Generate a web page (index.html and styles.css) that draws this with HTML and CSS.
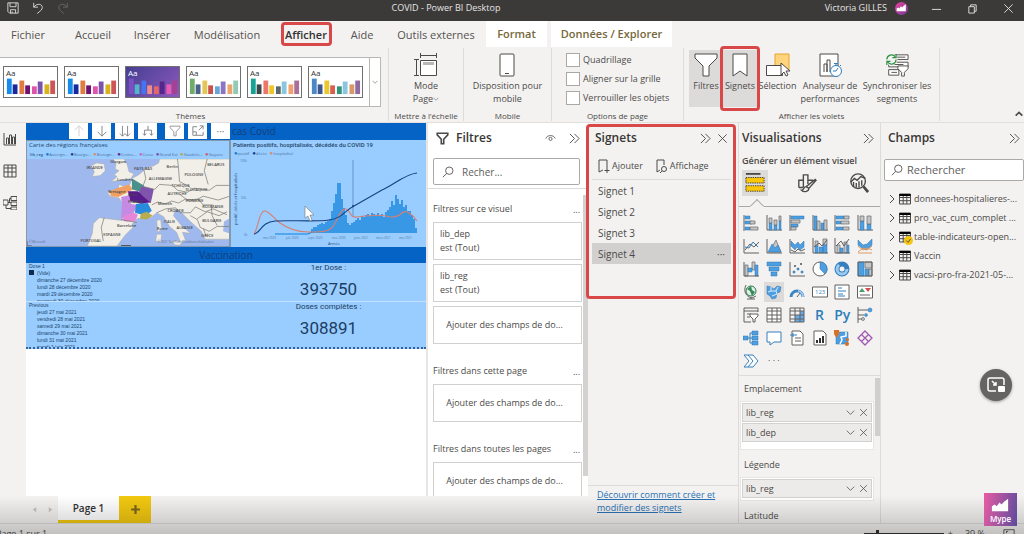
FILE: index.html
```html
<!DOCTYPE html>
<html lang="fr">
<head>
<meta charset="utf-8">
<title>COVID - Power BI Desktop</title>
<link rel="stylesheet" href="styles.css">
</head>
<body>
<svg class="defs" aria-hidden="true">
  <symbol id="theme" viewBox="0 0 55 31">
    <rect class="c1" x="3" y="12" width="5" height="16"/><rect class="c2" x="9" y="18" width="5" height="10"/><rect class="c3" x="16" y="14" width="5" height="14"/><rect class="c4" x="22" y="19" width="5" height="9"/><rect class="c5" x="29" y="20" width="5" height="8"/><rect class="c6" x="35" y="15" width="5" height="13"/><rect class="c7" x="42" y="18" width="5" height="10"/><rect class="c8" x="48" y="14" width="5" height="14"/>
  </symbol>
  <symbol id="more-right" viewBox="0 0 12 12"><path class="ln" d="M1 1l5 5-5 5M6 1l5 5-5 5"/></symbol>
  <symbol id="close" viewBox="0 0 12 12"><path class="ln" d="M1.5 1.5l9 9M10.5 1.5l-9 9"/></symbol>
  <symbol id="down" viewBox="0 0 12 12"><path class="ln" d="M1 3.5l5 5 5-5"/></symbol>
  <symbol id="right" viewBox="0 0 8 12"><path class="ln" d="M2 2l4 4-4 4"/></symbol>
  <symbol id="search" viewBox="0 0 14 14"><circle class="ln" cx="8.5" cy="5.5" r="4.3"/><path class="ln" d="M5.5 8.7L1 13"/></symbol>
  <symbol id="funnel" viewBox="0 0 16 16"><path class="ln" d="M1.5 1.5h13v2L9.5 9v5.5h-3V9l-5-5.5z"/></symbol>
  <symbol id="table" viewBox="0 0 12 12"><path class="ln" d="M.5 1h11v10H.5zM.5 4.5h11M.5 7.7h11M4.2 1v10M7.8 1v10"/><path d="M.5 1h11v2H.5z"/></symbol>
  <symbol id="mype" viewBox="0 0 34 34"><path fill="#fff" d="M8 19v-5l3-2 2 2 3-4 2 2 3-3 4-3v13z"/></symbol>
</svg>

<header class="titlebar">
  <div class="quick">
    <button aria-label="Enregistrer"><svg viewBox="0 0 14 14"><path class="ln" d="M1 1h12v12H3l-2-2zM3.5 1v4.500h7V1M4 13V9h6v4M6 13v-2"/></svg></button>
    <button aria-label="Annuler"><svg viewBox="0 0 14 14"><path class="ln" d="M2 1v5h5M2 6C6 1 12 2 12 6.500 12 9 9 11 6 13.500"/></svg></button>
    <button aria-label="Rétablir" class="dim"><svg viewBox="0 0 14 14"><path class="ln" d="M12 1v5H7M12 6C8 1 2 2 2 6.500 2 9 5 11 8 13.500"/></svg></button>
  </div>
  <h1>COVID - Power BI Desktop</h1>
  <div class="account"><span>Victoria GILLES</span><svg class="avatar" viewBox="5 2 24 24"><use href="#mype" width="34" height="34"/></svg></div>
  <div class="window-buttons">
    <button aria-label="Réduire"><svg viewBox="0 0 12 12"><path class="ln" d="M1 7h10"/></svg></button>
    <button aria-label="Restaurer"><svg viewBox="0 0 12 12"><path class="ln" d="M2 4h6v7H2zM4 4V2h6v7H8"/></svg></button>
    <button aria-label="Fermer"><svg viewBox="0 0 12 12"><use href="#close"/></svg></button>
  </div>
</header>

<nav class="tabs">
  <a href="#fichier" class="file">Fichier</a><a href="#accueil">Accueil</a><a href="#inserer">Insérer</a><a href="#modelisation">Modélisation</a><a href="#afficher" class="active marked">Afficher</a><a href="#aide">Aide</a><a href="#outils">Outils externes</a><a href="#format" class="context">Format</a><a href="#donnees" class="context last">Données / Explorer</a>
</nav>

<section class="ribbon">
  <div class="group themes">
    <div class="gallery">
      <button class="theme t1"><span>Aa</span><svg><use href="#theme"/></svg></button>
      <button class="theme t1"><span>Aa</span><svg><use href="#theme"/></svg></button>
      <button class="theme t3"><span>Aa</span><svg><use href="#theme"/></svg></button>
      <button class="theme t4"><span>Aa</span><svg><use href="#theme"/></svg></button>
      <button class="theme t5"><span>Aa</span><svg><use href="#theme"/></svg></button>
      <button class="theme t6"><span>Aa</span><svg><use href="#theme"/></svg></button>
      <button class="expand" aria-label="Autres thèmes"><svg viewBox="0 0 12 12"><use href="#down"/></svg></button>
    </div>
    <h2>Thèmes</h2>
  </div>
  <div class="group scale">
    <div class="tools"><button class="tool"><svg viewBox="0 0 24 24"><path class="ln" fill="#fff" d="M6.500 7.500h16v15h-16z"/><path fill="#b9b8b7" d="M9 9h11v3H9z"/><path class="ln" d="M6.500 2.500h16M6.500 0v5M22.500 0v5M2.500 6.500v16M0 6.500h5M0 22.500h5"/></svg><span>Mode<br>Page<svg class="caret" viewBox="0 0 12 12"><use href="#down"/></svg></span></button></div>
    <h2>Mettre à l’échelle</h2>
  </div>
  <div class="group mobile">
    <div class="tools"><button class="tool"><svg viewBox="0 0 24 24"><rect class="ln" fill="#fff" x="5" y="1" width="14" height="22" rx="1"/><path class="ln" d="M10 20.500h4"/></svg><span>Disposition pour<br>mobile</span></button></div>
    <h2>Mobile</h2>
  </div>
  <div class="group options">
    <div class="checks">
      <label><input type="checkbox">Quadrillage</label>
      <label><input type="checkbox">Aligner sur la grille</label>
      <label><input type="checkbox">Verrouiller les objets</label>
    </div>
    <h2>Options de page</h2>
  </div>
  <div class="group panes">
    <div class="tools">
      <button class="tool on"><svg viewBox="0 0 24 24"><path class="ln" fill="#fff" d="M1 1h22v4l-8 8v10H9V13L1 5z"/></svg><span>Filtres</span></button>
      <button class="tool on marked"><svg viewBox="0 0 24 24"><path class="ln" fill="#fff" d="M5 1h14v22l-7-5-7 5z"/></svg><span>Signets</span></button>
      <button class="tool select"><svg viewBox="0 0 24 24"><path fill="#ffd47c" stroke="#e8a32c" d="M9 1h14v16H9z"/><path class="ln" fill="#fff" d="M.5 12.500h16v10H.5z"/><path class="ln" fill="#fff" d="M15 10v12l3-3 2 4 2-1-2-4h4z"/></svg><span>Sélection</span></button>
      <button class="tool perf"><svg viewBox="0 0 24 24"><path class="ln" fill="#fff" d="M2 1h18v22H2z"/><path class="ln" d="M6 19v-8h3v8M9 19V7h3v12"/><g fill="#fff" stroke="#2f7fc0"><circle cx="18" cy="18" r="5.500"/><path d="M16 10.500h4M18 11v2M18 18l2-3M18 18h-3M22 12l1 1"/></g></svg><span>Analyseur de<br>performances</span></button>
      <button class="tool sync"><svg viewBox="0 0 26 24"><path class="ln" fill="#fff" d="M10 1h15v5H10zM4 9h21v5H4zM4 17h11v6H4z"/><path class="ln" d="M13 3.500h9M8 11.500h12M7 20h6"/><circle cx="7" cy="6" r="6.500" fill="#f3f2f1"/><path fill="none" stroke="#2f9145" stroke-width="1.300" d="M2 6a5 5 0 0 1 9-3M12 0v4H8M12 6a5 5 0 0 1-9 3M2 12V8h4"/><path class="ln" fill="#fff" d="M14 13h11v3l-4 4v4h-3v-4l-4-4z"/></svg><span>Synchroniser les<br>segments</span></button>
    </div>
    <h2>Afficher les volets</h2>
  </div>
  <button class="collapse" aria-label="Réduire le ruban"><svg viewBox="0 0 12 12"><path class="ln" stroke-width="2" d="M2 8l4-4 4 4"/></svg></button>
</section>

<main class="workspace">
  <nav class="views">
    <button aria-label="Rapport"><svg viewBox="0 0 14 14"><path class="ln" d="M1 1v12h12M3.500 12V6h2v6M6.500 12V3h2v9M9.500 12V5h2v7M12.500 12V2"/></svg></button>
    <button aria-label="Données"><svg viewBox="0 0 14 14"><path class="ln" d="M1 1h12v12H1zM1 4h12M1 8h12M5 1v12M9 1v12"/></svg></button>
    <button aria-label="Modèle"><svg viewBox="0 0 14 14"><path class="ln" d="M0 4h5v5H0zM8 .5h6v4H8zM8 6h6v3.500H8zM8 11h6v3H8zM5 6.500h3M6.500 6V2.500H8M3 9v3.500h5"/></svg></button>
  </nav>

  <div class="editor">
    <div class="editor-top">
      <div class="canvas">
        <div class="report">
          <div class="banner first">cas Covid
            <div class="visual-tools">
              <button class="faint" aria-label="Monter"><svg viewBox="0 0 14 14"><path class="ln" d="M7 13V1M2 6l5-5 5 5"/></svg></button>
              <button aria-label="Descendre"><svg viewBox="0 0 14 14"><path class="ln" d="M7 1v12M2 8l5 5 5-5"/></svg></button>
              <button aria-label="Niveau suivant"><svg viewBox="0 0 14 14"><path class="ln" d="M4 1v12M1 10l3 3 3-3M10 1v12M7 10l3 3 3-3"/></svg></button>
              <button aria-label="Développer"><svg viewBox="0 0 14 14"><path class="ln" d="M7 1v5M3 12V6h8v6M1 10l2 2 2-2M9 10l2 2 2-2"/></svg></button>
              <button class="apart" aria-label="Filtres"><svg viewBox="0 0 16 16"><use href="#funnel"/></svg></button>
              <button aria-label="Mode focus"><svg viewBox="0 0 14 14"><path class="ln" d="M6 2H1v10h12V8M9 1h4v4M13 1L8 6M1 8h4v4"/></svg></button>
              <button aria-label="Plus d’options">···</button>
            </div>
          </div>
          <article class="visual map-visual">
            <h3>Carte des régions françaises</h3>
            <ul class="legend">
              <li class="title">lib_reg</li><li class="l1">Auvergn...</li><li class="l2">Bourgo...</li><li class="l3">Bretagn...</li><li class="l4">Centre...</li><li class="l5">Corse</li><li class="l6">Grand Est</li><li class="l7">Guadelo...</li><li class="l8">Guyane</li>
            </ul>
            <svg class="map" viewBox="0 0 204 89" preserveAspectRatio="none">
              <path fill="#9fb8ee" d="M0 0h204v89H0z"/>
              <g fill="#f1efe8" stroke="#aaa9a2" stroke-width=".5">
                <path d="M65 7l5-3 8 1 1 7-5 5-8 1 2-5z"/>
                <path d="M87 0l3 5-1 5 4 2-5 4 3 2-6 5 8-1 12-2 3-5-5-2-2-8-3-5z"/>
                <path d="M134 0l-1 4-5 3-7 2-8 7-7 4-2 6-6 2-5-2-1 6-11 2 3 4 9 2 4 6-1 17-23-3-6 6-1 10-5 13h30l8-11 8-8-1-3 5-6 14-1 6-5 7 4 6 10 7 6 4 10 5-2-3-8 8 1-10-9-7-9 2-7 4 2 11 11 11 10 4 8h31V0z"/>
                <path d="M131 63l4-1 1 10-4 3zM131 77h5l-1 8-5-1zM145 84h12l-2 4h-5z"/>
              </g>
              <path fill="#9fb8ee" d="M204 61l-5 3-1 10 6 2z"/>
              <path fill="#f0a064" d="M83 33l8-3 12-4 4 5-7 4-8 4-7-1z"/><path fill="#4b918b" d="M106 20l12 7-2 7-10-3z"/><path fill="#8054ad" d="M116 28l12 3-3 14-8-1-5-8z"/><path fill="#581b8c" d="M102 33l10 0 6 6 6 5-8 2-12-3z"/><path fill="#c48ae4" d="M95 39l8-2 2 9 7 1-5 9-12 5 1-16z"/><path fill="#298bdb" d="M110 46l12-1 4 8-6 5-11-3z"/><path fill="#e586d7" d="M96 62l4-5 8-2 4 2-3 7-10 0z"/><path fill="#b7ac50" d="M115 56l6-2 6 4-6 4-7-1z"/>
              <g fill="none" stroke="#74736f" stroke-width=".7"><path d="M118 11l2 9-3 8 12 3 5-5 13 1 5 5 10 2 7-4 15 2 7-5 13 0M126 47l6-3 8 2 6-3 7 2 7-4 9 2 9-5 15 4 12-4M131 55l9-4 10-1 5 5 10 0 5-6 10 5 8-3 14 6M152 0l1 9 1 14 11 6M182 0l-3 12 4 14M154 36l8 6 11-1 5 6 10 0M165 58l7 4 3 8 9 4 8-5 12 0M172 61l10-7 12 4 8-4M178 71l3 8M78 60l-3 10 2 14M95 62l16 3M186 48l1 10 5 10"/></g>
              <g class="country"><text x="60" y="10">IRLANDE</text><text x="84" y="4">Glasgow</text><text x="108" y="11">PAYS-BAS</text><text x="123" y="21">ALLEMAGNE</text><text x="159" y="17">POLOGNE</text><text x="182" y="7">BELARUS</text><text x="91" y="23">Londres</text><text x="141" y="9">Berlin</text><text x="146" y="29">TCHÈQUE</text><text x="160" y="33">SLOVAQUIE</text><text x="142" y="37">AUTRICHE</text><text x="160" y="44">HONGRIE</text><text x="177" y="50">ROUMANIE</text><text x="132" y="47">Munich</text><text x="142" y="54">CROATIE</text><text x="177" y="64">BULGARIE</text><text x="138" y="65">ITALIE</text><text x="131" y="73">Rome</text><text x="77" y="79">ESPAGNE</text><text x="54" y="85">PORTUGAL</text><text x="176" y="80">GRÈCE</text><text x="91" y="70">Barcelone</text><text x="102" y="38">Paris</text><text x="102" y="45">FRANCE</text><text x="82" y="35">Bretagne</text><text x="151" y="72">ALBANIE</text></g>
              <g class="credit"><text x="2" y="86">© Microsoft</text><text x="132" y="86">© 2021 TomTom, Conditions d’utilisation</text></g>
              <path fill="none" stroke="#555" d="M0 84v5h5M95 88.500h10"/>
            </svg>
          </article>
          <article class="visual chart-visual">
            <h3>Patients positifs, hospitalisés, décédés du COVID 19</h3>
            <ul class="legend"><li class="l1">positif</li><li class="l2">décès</li><li class="l3">hospitalisé</li></ul>
            <svg class="chart" viewBox="0 0 195 89">
              <path fill="none" stroke="#3d76ad" stroke-width=".6" d="M122 2v56"/>
              <path fill="none" stroke="#0f82dc" stroke-width="1.100" d="M44 76h33l4-2"/>
              <path fill="none" stroke="#0f82dc" stroke-width="1.400" d="M81 75v-4M83 75v-6M85 75v-6M87 75v-8M89 75v-9M91 75v-10M93 75v-9M95 75v-11M97 75v-12M99 75v-14M101 75v-22M103 75v-30M105 75v-39M107 75v-50M109 75v-50M111 75v-34M113 75v-25M115 75v-18M117 75v-10M119 75v-8M121 75v-10M123 75v-11M125 75v-13M127 75v-15M129 75v-13M131 75v-17M133 75v-16M135 75v-18M137 75v-19M139 75v-17M141 75v-20M143 75v-19M145 75v-18M147 75v-20M149 75v-17M151 75v-19M153 75v-16M155 75v-21M157 75v-23M159 75v-26M161 75v-32M163 75v-28M165 75v-38M167 75v-34M169 75v-29M171 75v-33M173 75v-26M175 75v-28M177 75v-22M179 75v-22M181 75v-18M183 75v-14M185 75v-5"/>
              <path fill="none" stroke="#d67f72" stroke-width="1.100" d="M23 76c4-5 5-22 10-23s9 7 16 12 17 9 28 9 21 1 26-7 7-17 12-16 3 9 11 8 22-3 29-1 12 1 16-3 11 2 15 8"/>
              <path fill="none" stroke="#16417f" stroke-width="1.100" d="M23 76c7-1 7-12 21-13s40 1 54-1 15-9 25-14l28-16c10-4 23-16 35-17"/>
              <circle cx="122" cy="48" r="1" fill="#174180"/>
              <path fill="#fff" stroke="#777" stroke-width=".6" d="M74 48v12l3-2 2 5 2-1-2-5h4z"/>
              <g class="axis"><text x="9" y="4">100k</text><text x="10" y="41">50k</text><text x="13" y="78">0k</text><text x="32" y="81">mai 2020</text><text x="55" y="81">juil. 2020</text><text x="77" y="81">sept. 2020</text><text x="101" y="81">nov. 2020</text><text x="123" y="81">janv. 2021</text><text x="145" y="81">mars 2021</text><text x="168" y="81">mai 2021</text></g>
              <g class="axis-title"><text x="97" y="87">Année</text><text transform="translate(6 67)rotate(-90)">positif, décès et hospitalisés</text></g>
            </svg>
          </article>
          <div class="banner second">Vaccination</div>
          <div class="slicer"><h4>Dose 1</h4><ul><li class="checked">(Vide)</li><li>dimanche 27 décembre 2020</li><li>lundi 28 décembre 2020</li><li>mardi 29 décembre 2020</li><li>mercredi 30 décembre 2020</li></ul></div>
          <div class="card"><h4>1er Dose :</h4><p>393750</p></div>
          <div class="slicer lower"><h4>Previous</h4><ul><li>jeudi 27 mai 2021</li><li>vendredi 28 mai 2021</li><li>samedi 29 mai 2021</li><li>dimanche 30 mai 2021</li><li>lundi 31 mai 2021</li><li>mardi 1 juin 2021</li></ul></div>
          <div class="card lower"><h4>Doses complètes :</h4><p>308891</p></div>
        </div>
      </div>

      <aside class="filters">
        <header class="pane-head"><svg class="lead" viewBox="0 0 16 16"><use href="#funnel"/></svg><h2>Filtres</h2><button class="eye" aria-label="Masquer"><svg viewBox="0 0 14 12"><path class="ln" d="M1 6C3 1 11 1 13 6"/><circle class="ln" cx="7" cy="6.500" r="2"/></svg></button><button aria-label="Réduire"><svg viewBox="0 0 12 12"><use href="#more-right"/></svg></button></header>
        <div class="search"><svg viewBox="0 0 14 14"><use href="#search"/></svg><input type="text" aria-label="Rechercher un filtre" placeholder="Recher..."></div>
        <div class="filter-list">
          <section><h3>Filtres sur ce visuel<button aria-label="Plus">...</button></h3>
            <div class="filter">lib_dep<br>est (Tout)</div><div class="filter">lib_reg<br>est (Tout)</div><div class="filter add">Ajouter des champs de do...</div></section>
          <section><h3>Filtres dans cette page<button aria-label="Plus">...</button></h3><div class="filter add">Ajouter des champs de do...</div></section>
          <section><h3>Filtres dans toutes les pages<button aria-label="Plus">...</button></h3><div class="filter add">Ajouter des champs de do...</div></section>
        </div>
      </aside>
    </div>
    <div class="page-tabs"><button class="step" aria-label="Précédente"><svg viewBox="0 0 8 8"><path d="M6 1v6L2 4z"/></svg></button><button class="step" aria-label="Suivante"><svg viewBox="0 0 8 8"><path d="M2 1v6l4-3z"/></svg></button><button class="page">Page 1</button><button class="add-page" aria-label="Nouvelle page"><svg viewBox="0 0 10 10"><path d="M4 1h2v3h3v2H6v3H4V6H1V4h3z"/></svg></button></div>
  </div>

  <aside class="bookmarks">
    <div class="bookmark-box">
      <header class="pane-head"><h2>Signets</h2><button aria-label="Réduire"><svg viewBox="0 0 12 12"><use href="#more-right"/></svg></button><button aria-label="Fermer"><svg viewBox="0 0 12 12"><use href="#close"/></svg></button></header>
      <div class="bookmark-tools"><button><svg viewBox="0 0 12 14"><path class="ln" d="M6 11l-4 2V1h8v8M10 9v5M7.500 11.500h5"/></svg>Ajouter</button><button><svg viewBox="0 0 12 14"><path class="ln" d="M5 11l-3 2V1h7v5"/><circle class="ln" cx="9" cy="10" r="2.500"/><path class="ln" d="M7 12l-2 2"/></svg>Affichage</button></div>
      <ul><li>Signet 1</li><li>Signet 2</li><li>Signet 3</li><li class="selected">Signet 4<button aria-label="Plus">···</button></li></ul>
    </div>
    <footer><a href="#aide-signets">Découvrir comment créer et modifier des signets</a></footer>
  </aside>

  <aside class="visuals">
    <header class="pane-head"><h2>Visualisations</h2><button aria-label="Réduire"><svg viewBox="0 0 12 12"><use href="#more-right"/></svg></button></header>
    <h3>Générer un élément visuel</h3>
    <div class="modes">
      <button class="on" aria-label="Générer"><svg viewBox="0 0 22 22"><path class="ln" stroke-width="2" d="M1 1h16"/><path fill="#fac60c" stroke="#333" stroke-dasharray="1.500 1" d="M1 5h20v6H1zM1 14h20v6H1z"/></svg></button>
      <button aria-label="Mettre en forme"><svg viewBox="0 0 22 22"><path class="ln" stroke-width="1.500" d="M2 16V8h5v8M7 14V2h5v10M12 8h5v2M2 16h5"/><path class="ln" fill="#f3f2f1" stroke-width="1.500" d="M20 7l1 1-8 9-3-2zM10 15c-3 0-2 4-5 4 3 3 8 1 8-2"/></svg></button>
      <button aria-label="Analyser"><svg viewBox="0 0 22 22"><circle class="ln" stroke-width="1.500" cx="10" cy="9" r="8"/><path class="ln" stroke-width="1.500" d="M2 10l4-4 3 2 4-4 5 2M5 10v5M8 11v5M11 9v7M14 8v6"/><path class="ln" stroke-width="3" d="M16 15l5 6"/></svg></button>
    </div>
    <div class="viz-grid">
      <button aria-label="Barres empilées"><svg viewBox="0 0 16 16"><path class="d" d="M1 0v16"/><path class="b" d="M2 1h5v3H2zM2 6h7v3H2zM2 12h5v3H2z"/><path class="s" d="M7 6h5v3H7zM7 12h8v3H7z"/></svg></button>
      <button aria-label="Colonnes empilées"><svg viewBox="0 0 16 16"><path class="d" d="M1 0v15h15"/><path class="b" d="M3 8h3v7H3zM8 10h3v5H8zM13 6h2v9h-2z"/><path class="s" d="M3 3h3v5H3zM8 5h3v5H8zM13 1h2v5h-2z"/></svg></button>
      <button aria-label="Barres groupées"><svg viewBox="0 0 16 16"><path class="d" d="M1 0v16"/><path class="b" d="M2 1h13v3H2zM2 9h7v3H2z"/><path class="s" d="M2 5h9v3H2zM2 12h5v3H2z"/></svg></button>
      <button aria-label="Colonnes groupées"><svg viewBox="0 0 16 16"><path class="d" d="M1 0v15h15"/><path class="b" d="M2 1h3v14H2zM9 8h3v7H9z"/><path class="s" d="M5 6h3v9H5zM12 5h3v10h-3z"/></svg></button>
      <button aria-label="Barres 100 %"><svg viewBox="0 0 16 16"><path class="d" d="M1 0v16"/><path class="b" d="M2 1h8v3H2zM2 6h5v3H2zM2 12h7v3H2z"/><path class="s" d="M10 1h5v3h-5zM7 6h8v3H7zM9 12h6v3H9z"/></svg></button>
      <button aria-label="Colonnes 100 %"><svg viewBox="0 0 16 16"><path class="d" d="M1 0v15h15"/><path class="b" d="M3 6h4v9H3zM10 9h4v6h-4z"/><path class="s" d="M3 1h4v5H3zM10 1h4v8h-4z"/></svg></button>
      <button aria-label="Courbes"><svg viewBox="0 0 16 16"><path class="d" d="M1 1v14h15M2 12l5-6 4 3 5-5"/><path class="u" d="M2 9l4 1 4-6 5 5"/></svg></button>
      <button aria-label="Aires"><svg viewBox="0 0 16 16"><path class="s" d="M3 14l7-12 5 12z"/><path class="b" d="M2 14l4-8 3 4 3-3 3 7z"/><path class="d" d="M1 1v14h15"/></svg></button>
      <button aria-label="Aires empilées"><svg viewBox="0 0 16 16"><path class="b" d="M2 3l4 4 3-3 2 3 4-4v6l-4 3-3-3-2 3-4-4z"/><path class="d" d="M1 1v14h15M2 12l4 2 3-3 3 2 4-2"/></svg></button>
      <button aria-label="Courbe et colonnes"><svg viewBox="0 0 16 16"><path class="s" d="M3 3h3v5H3zM11 1h4v6h-4z"/><path class="b" d="M3 8h3v7H3zM7 9h4v6H7zM11 7h4v8h-4z"/><path class="d" d="M1 0v15h15M2 9l5-4 3 3 5-6"/></svg></button>
      <button aria-label="Courbe et histogramme"><svg viewBox="0 0 16 16"><path class="s" d="M3 7h3v8H3zM10 4h3v11h-3z"/><path class="b" d="M6 10h3v5H6zM13 7h2v8h-2z"/><path class="d" d="M1 0v15h15M2 8l5-5 3 5 5-7"/></svg></button>
      <button aria-label="Ruban"><svg viewBox="0 0 16 16"><path class="b" d="M1 2l5 5 4-1 5-5v6l-5 5-4-1-5-4z"/><path class="o" d="M1 8l5 4 4-2 5 2M1 14l5-4 4 2 5-4M1 15h14"/></svg></button>
      <button aria-label="Cascade"><svg viewBox="0 0 16 16"><path class="s" d="M2 4h3v11H2zM9 1h3v8H9z"/><path class="b" d="M5 7h4v4H5zM12 4h3v11h-3z"/><path class="d" d="M1 1v14h15"/></svg></button>
      <button aria-label="Entonnoir"><svg viewBox="0 0 16 16"><path class="b" d="M1 1h14v4H1zM3 6h10v4H3zM5 11h6v4H5z"/></svg></button>
      <button aria-label="Nuage de points"><svg viewBox="0 0 16 16"><path class="d" d="M1 1v14h15"/><path class="b" d="M4 10h2v2H4zM8 7h2v2H8zM12 10h2v2h-2z"/><path fill="#777" d="M5 4h2v2H5zM11 2h2v2h-2z"/></svg></button>
      <button aria-label="Secteurs"><svg viewBox="0 0 16 16"><circle class="d" fill="#fff" cx="8" cy="8" r="7"/><path class="b" d="M8 1v7l5 5A7 7 0 0 0 8 1z"/></svg></button>
      <button aria-label="Anneau"><svg viewBox="0 0 16 16"><circle fill="none" stroke="#357fbd" stroke-width="5" cx="8" cy="8" r="5"/><circle fill="none" stroke="#9acaf0" stroke-width="3" cx="8" cy="8" r="5" stroke-dasharray="20 12"/></svg></button>
      <button aria-label="Treemap"><svg viewBox="0 0 16 16"><path class="b" d="M1 1h6v14H1zM8 8h4v7H8z"/><path class="s" d="M8 1h7v6H8zM12 8h3v7h-3z"/><path class="d" d="M1 1h14v14H1z"/></svg></button>
      <button aria-label="Carte"><svg viewBox="0 0 16 16"><circle cx="8" cy="7" r="5" fill="#e0eee6" stroke="#277b4b"/><path fill="#39885a" d="M4 5l4-3 1 4 3 2-3 4-2-5z"/><path class="d" d="M3 1C0 7 3 13 9 14l4-2M8 13v2M4 15h8"/></svg></button>
      <button class="on" aria-label="Carte choroplèthe"><svg viewBox="0 0 16 16"><path class="b" d="M1 2l4 1 3 2 3-3 4 1-1 5-3 1-1 5-4 1-2-3-3-2z"/><path fill="none" stroke="#dcecf9" d="M5 3v4l-3 1M5 7h5l2-4M10 7l1 3-5 2"/></svg></button>
      <button aria-label="Jauge"><svg viewBox="0 0 16 16"><path fill="none" stroke="#3d85c2" stroke-width="3" d="M2 13a6 6 0 0 1 12 0"/><path fill="none" stroke="#9ecaf0" stroke-width="2" d="M9 7a6 6 0 0 1 5 6"/><path class="d" d="M8 13l3-4"/></svg></button>
      <button aria-label="Indicateur"><svg viewBox="0 0 16 16"><path class="d" fill="#fff" d="M.5 3h15v10H.5z"/><text class="num" x="3" y="10">123</text></svg></button>
      <button aria-label="Carte multiligne"><svg viewBox="0 0 16 16"><path class="d" fill="#fff" d="M1 1h14v14H1z"/><path class="u" d="M4 4h4M4 7h8M4 10h5M4 12h7"/></svg></button>
      <button aria-label="KPI"><svg viewBox="0 0 16 16"><path class="d" fill="#fff" d="M.5 2h15v12H.5z"/><path fill="#47a067" d="M2 8l3-4 3 4z"/><path fill="#d94a4e" d="M8 4h6l-3 4z"/><path class="d" d="M3 11h10"/></svg></button>
      <button aria-label="Segment"><svg viewBox="0 0 16 16"><path class="d" d="M15 5V1H1v14h7M1 4h14M4 7h4M4 10h3"/><path class="d" fill="#fff" d="M7 7h8v2l-3 3v3h-2v-3L7 9z"/></svg></button>
      <button aria-label="Table"><svg viewBox="0 0 16 16"><path class="d" fill="#fff" d="M1 1h14v14H1zM1 4h14M1 8h14M1 12h14M6 1v14M11 1v14"/></svg></button>
      <button aria-label="Matrice"><svg viewBox="0 0 16 16"><path fill="#65aceb" d="M6 8h9v7H6zM11 4h4v4h-4z"/><path class="d" d="M1 1h14v14H1zM1 4h14M1 8h14M1 12h14M6 1v14M11 1v14"/></svg></button>
      <button class="word" aria-label="Visuel R">R</button>
      <button class="word" aria-label="Visuel Python">Py</button>
      <button aria-label="Influenceurs clés"><svg viewBox="0 0 16 16"><path class="d" d="M1 0v16M1 3h10M1 8h6M1 12h4"/><circle class="b" cx="13" cy="3" r="2"/><circle class="b" cx="9" cy="8" r="1.500"/><circle class="s" cx="6" cy="12" r="1.500"/></svg></button>
      <button aria-label="Arbre"><svg viewBox="0 0 16 16"><path class="b" d="M0 6h5v4H0zM9 1h6v4H9zM9 6h6v4H9zM9 11h6v4H9z"/><path class="u" d="M5 8h4M7 8V3h2M7 8v5h2"/></svg></button>
      <button aria-label="Questions"><svg viewBox="0 0 16 16"><path class="u" fill="#fff" d="M1 2h14v10H8l-4 3v-3H1z"/></svg></button>
      <button aria-label="Récit"><svg viewBox="0 0 16 16"><path class="d" fill="#fff" d="M3 1h8l3 3v11H3z"/><path class="d" d="M6 8h6M6 11h6"/><path class="u" d="M1 5h7M4 3v4"/></svg></button>
      <button aria-label="Paginé"><svg viewBox="0 0 16 16"><path class="d" fill="#fff" d="M2 1h9l3 3v11H2z"/><path fill="#333" d="M4 10h2v3H4zM7 8h2v5H7zM10 6h2v7h-2z"/></svg></button>
      <button aria-label="ArcGIS"><svg viewBox="0 0 16 16"><path class="b" d="M2 2h12v12H2z"/><path fill="none" stroke="#fff" stroke-width="1.500" d="M6 14l2-4-1-3 5-1V2"/><path fill="#df6f20" d="M0 0h5v4L2.500 8 0 4z"/><circle cx="13.500" cy="9.500" r="1.500" fill="#df6f20"/><circle cx="13" cy="14" r="2" fill="#df6f20"/></svg></button>
      <button aria-label="Power Apps"><svg viewBox="0 0 16 16"><path fill="none" stroke="#a15ab0" stroke-width="1.300" d="M8 1l7 7-7 7-7-7zM4.500 4.500l7 7M11.500 4.500l-7 7"/></svg></button>
      <button aria-label="Power Automate"><svg viewBox="0 0 16 16"><path class="u" fill="#fff" d="M1 2h9l5 6-5 6H1l5-6zM5 2l5 6-5 6"/></svg></button>
      <button class="dots" aria-label="Plus">· · ·</button>
    </div>
    <div class="wells">
      <h4>Emplacement</h4>
      <div class="well roomy"><div class="field">lib_reg<button aria-label="Menu"><svg viewBox="0 0 12 12"><use href="#down"/></svg></button><button aria-label="Supprimer"><svg viewBox="0 0 12 12"><use href="#close"/></svg></button></div><div class="field">lib_dep<button aria-label="Menu"><svg viewBox="0 0 12 12"><use href="#down"/></svg></button><button aria-label="Supprimer"><svg viewBox="0 0 12 12"><use href="#close"/></svg></button></div></div>
      <h4>Légende</h4>
      <div class="well"><div class="field">lib_reg<button aria-label="Menu"><svg viewBox="0 0 12 12"><use href="#down"/></svg></button><button aria-label="Supprimer"><svg viewBox="0 0 12 12"><use href="#close"/></svg></button></div></div>
      <h4>Latitude</h4>
    </div>
  </aside>

  <aside class="fields">
    <header class="pane-head"><h2>Champs</h2><button aria-label="Réduire"><svg viewBox="0 0 12 12"><use href="#more-right"/></svg></button></header>
    <div class="search"><svg viewBox="0 0 14 14"><use href="#search"/></svg><input type="text" aria-label="Rechercher un champ" placeholder="Rechercher"></div>
    <ul>
      <li><svg class="chev" viewBox="0 0 8 12"><use href="#right"/></svg><svg viewBox="0 0 12 12"><use href="#table"/></svg><span>donnees-hospitalieres-...</span></li>
      <li><svg class="chev" viewBox="0 0 8 12"><use href="#right"/></svg><svg viewBox="0 0 12 12"><use href="#table"/></svg><span>pro_vac_cum_complet ...</span></li>
      <li><svg class="chev" viewBox="0 0 8 12"><use href="#right"/></svg><svg viewBox="0 0 12 12"><use href="#table"/></svg><svg class="badge" viewBox="0 0 10 10"><circle cx="5" cy="5" r="5" fill="#f5c713"/><path class="ln" d="M2.500 5l2 2 3-4"/></svg><span>table-indicateurs-open...</span></li>
      <li><svg class="chev" viewBox="0 0 8 12"><use href="#right"/></svg><svg viewBox="0 0 12 12"><use href="#table"/></svg><span>Vaccin</span></li>
      <li><svg class="chev" viewBox="0 0 8 12"><use href="#right"/></svg><svg viewBox="0 0 12 12"><use href="#table"/></svg><span>vacsi-pro-fra-2021-05-...</span></li>
    </ul>
  </aside>
</main>

<footer class="status"><span>Page 1 sur 1</span><div class="zoom"><span>-</span><input type="range" aria-label="Zoom" min="10" max="400" value="70"><span>+</span><span class="percent">39 %</span><svg viewBox="0 0 14 12"><path class="ln" d="M1 1h12v10H1z"/><path class="ln" d="M4 5V3h2M10 7v2H8"/></svg></div></footer>
<div class="shade"></div>
<button class="pip" aria-label="Image dans l’image"><svg viewBox="0 0 20 20"><path d="M10 16H4a2 2 0 0 1-2-2V5a2 2 0 0 1 2-2h12a2 2 0 0 1 2 2v5" fill="none" stroke="#fff" stroke-width="1.500"/><path d="M6 6l4 4M10 7v3H7" fill="none" stroke="#fff" stroke-width="1.500"/><rect x="12" y="11" width="7" height="6" rx="1" fill="#fff"/></svg></button>
<div class="brand"><svg viewBox="0 0 34 22"><use href="#mype" width="34" height="34"/></svg><span>Mype</span></div>
</body>
</html>
```
FILE: styles.css
```css
* { box-sizing: border-box; }
body { margin: 0; height: 100vh; overflow: hidden; display: flex; flex-direction: column; background: #f3f2f1; color: #4c4a48; font: 9px/16px "Open Sans", "Noto Sans", sans-serif; }
button { border: 0; padding: 0; background: none; color: inherit; font: inherit; display: flex; align-items: center; justify-content: center; }
h1, h2, h3, h4, p, ul { margin: 0; padding: 0; font-size: inherit; font-weight: 400; list-style: none; }
svg { display: block; width: 12px; height: 12px; flex: none; }
.defs { position: absolute; width: 0; height: 0; }
.ln { stroke: currentColor; }
.ln:not([fill]) { fill: none; }
input { font: inherit; color: inherit; margin: 0; }

.titlebar { height: 21px; flex: none; display: grid; grid-template-columns: 1fr auto 1fr 100px; align-items: center; background: #3b3a39; color: #e6e5e4; padding-bottom: 5px; }
.titlebar h1 { padding-right: 32px; }
.quick { display: flex; gap: 13px; padding-left: 7px; }
.dim { color: #6c6a69; }
.account { display: flex; justify-content: flex-end; align-items: center; gap: 8px; padding-right: 16px; }
.titlebar .avatar { border-radius: 50%; width: 13px; height: 13px; background: linear-gradient(135deg, #f0409c, #703c9c); }
.window-buttons { display: flex; justify-content: space-between; padding: 0 10px 0 7px; }
.window-buttons svg { width: 11px; height: 11px; }

.tabs { flex: none; display: grid; grid-template-columns: 62px 62px 56px 94px 64px 48px 100px 61px 125px; height: 27px; }
.tabs a { position: relative; color: #55524f; text-decoration: none; font-size: 11px; display: flex; align-items: center; justify-content: center; white-space: nowrap; }
.tabs .file { justify-content: flex-start; padding-left: 11px; }
.tabs .active { font-weight: 600; color: #33312f; }
.tabs .context { background: #fff; color: #75683a; font-weight: 600; margin-bottom: 1px; }
.tabs .last { margin-left: 4px; }
.marked::after, .bookmark-box::after { content: ""; position: absolute; border: 3px solid #d84848; border-radius: 4px; pointer-events: none; }
.tabs .marked::after { inset: 1px 6px 2px 7px; }

.ribbon { position: relative; flex: none; height: 75px; display: flex; border-bottom: 1px solid #e1dfdd; }
.group { display: flex; flex-direction: column; border-right: 1px solid #dedcda; margin-bottom: 1px; }
.group h2 { margin-top: auto; text-align: center; font-size: 8px; line-height: 10px; white-space: nowrap; }
.themes { width: 389px; padding: 9px 7px 0 0; }
.gallery { height: 50px; display: flex; gap: 6px; align-items: center; background: #fff; border: 1px solid #b9b7b5; border-left: 0; padding-left: 3px; }
.theme { width: 55px; height: 32px; border: 1px solid #72706e; position: relative; display: block; background: #fff; color: #333; }
.theme svg { width: 53px; height: 30px; }
.theme span { position: absolute; left: 2px; top: 1px; font-size: 8px; line-height: 10px; }
.expand { margin-left: auto; align-self: stretch; width: 14px; border-left: 1px solid #b9b7b5; }
.expand svg { width: 6px; }
.c1 { fill: var(--c1); } .c2 { fill: var(--c2); } .c3 { fill: var(--c3); } .c4 { fill: var(--c4); } .c5 { fill: var(--c5); } .c6 { fill: var(--c6); } .c7 { fill: var(--c7); } .c8 { fill: var(--c8); }
.t1 { --c1: #158bea; --c2: #17299c; --c3: #e07b42; --c4: #6c126f; --c5: #dd54aa; --c6: #7953ae; --c7: #d8b31b; --c8: #ce5557; }
.t3 { --c1: #7c50c4; --c2: #55b4cd; --c3: #4474f1; --c4: #ee8d8a; --c5: #e66565; --c6: #55268c; --c7: #ec5ab2; --c8: #a74092; background: linear-gradient(135deg, #443f91, #8f59bd); color: #fff; }
.t4 { --c1: #70ac67; --c2: #4c6389; --c3: #e4c556; --c4: #c95149; --c5: #67a6d6; --c6: #8a75c4; --c7: #eda56d; --c8: #91cbb6; }
.t5 { --c1: #16a396; --c2: #39474b; --c3: #ec7669; --c4: #efc629; --c5: #59686c; --c6: #8bc6df; --c7: #f2a16e; --c8: #a9709a; }
.t6 { --c1: #4b88c5; --c2: #3f568a; --c3: #eac82c; --c4: #d95f52; --c5: #2f947a; --c6: #8cc5e0; --c7: #d79968; --c8: #8e6aa3; }
.scale { width: 75px; } .mobile { width: 88px; } .options { width: 132px; } .panes { width: 256px; }
.tools { display: flex; justify-content: center; padding-top: 2px; }
.tool { position: relative; flex-direction: column; justify-content: flex-start; height: 57px; padding-top: 3px; line-height: 13px; text-align: center; white-space: nowrap; }
.tool > svg { width: 24px; height: 24px; margin-bottom: 2px; }
.tool .caret { display: inline-block; width: 6px; height: 6px; }
.panes .tools { justify-content: flex-start; padding-left: 5px; }
.on { background: #dddbda; }
.panes .tool { width: 34px; }
.panes .select { width: 41px; }
.panes .perf { width: 64px; }
.panes .sync { width: 70px; }
.panes .perf, .panes .sync, .panes .select { flex: none; }
.tool.marked::after { inset: -4px -3px -4px -3px; z-index: 1; }
.checks { padding: 2px 0 0 14px; }
.checks label { display: flex; gap: 3px; align-items: center; height: 19px; white-space: nowrap; }
.checks input { appearance: none; width: 14px; height: 14px; border: 1px solid #aaa8a6; background: #fff; }
.collapse { position: absolute; right: 0; bottom: 2px; }
.collapse svg { width: 10px; }

.workspace { flex: 1; min-height: 0; display: flex; }
.views { width: 26px; flex: none; display: flex; flex-direction: column; align-items: center; gap: 18px; padding: 9px 6px 0 0; }
.views svg { width: 14px; height: 14px; }
.editor { flex: 1; min-width: 0; display: flex; flex-direction: column; }
.editor-top { flex: 1; min-height: 0; display: flex; }
.canvas { flex: 1; min-width: 0; background: #fff; }
.report { display: grid; grid-template-columns: 205fr 195fr; grid-template-rows: 17px 107px 16px 38px 46px; background: #99ccff; border-bottom: 2px dotted #35629a; }
.banner { grid-column: 1 / 3; position: relative; background: #0563c5; color: #123f7c; font-size: 10px; line-height: 17px; }
.first { padding-left: 206px; }
.second { text-align: center; }
.visual-tools { position: absolute; left: 43px; top: 0; height: 16px; display: flex; gap: 4px; }
.visual-tools button { width: 19px; background: #fff; color: #77797c; }
.visual-tools .faint { color: #ccc; }
.visual-tools .apart { margin-left: 4px; }
.visual { position: relative; display: flex; flex-direction: column; min-width: 0; overflow: hidden; }
.visual h3 { padding-left: 2px; font-size: 6px; line-height: 9px; color: #25476a; white-space: nowrap; }
.chart-visual h3 { font-family: Roboto, sans-serif; font-weight: 500; }
.legend { display: flex; justify-content: space-between; font-size: 4px; line-height: 9px; color: #4b6f9a; padding: 0 6px 0 3px; white-space: nowrap; }
.chart-visual .legend { justify-content: flex-start; gap: 3px; }
.legend li::before { content: "●"; font-size: 6px; color: var(--dot); }
.legend .title::before { content: none; }
.title { font-weight: 700; }
.l1 { --dot: #1679d2; } .l2 { --dot: #183886; } .l3 { --dot: #dc8c66; } .l4 { --dot: #60278d; } .l5 { --dot: #c765cd; } .l6 { --dot: #7052a8; } .l7 { --dot: #b8ad45; } .l8 { --dot: #c26175; }
.map, .chart { width: 100%; flex: 1; min-height: 0; height: auto; }
.map-visual { border: 1px solid #8298ad; border-right-width: 2px; }
.country { font: 600 4px "Open Sans", sans-serif; fill: #4a4a4a; }
.credit { font: 3px "Open Sans", sans-serif; fill: #5e6e92; }
.axis { font: 3px "Open Sans", sans-serif; fill: #527aa5; }
.axis-title { font: 4px "Open Sans", sans-serif; fill: #254a78; }
.slicer { padding: 0 3px; overflow: hidden; font: 5px/7px "Liberation Sans", sans-serif; color: #20456b; }
.slicer h4 { line-height: 7px; }
.slicer li { padding-left: 8px; }
.slicer .checked { padding-left: 0; }
.checked::before { content: ""; display: inline-block; width: 5px; height: 5px; background: #102b4a; margin-right: 3px; }
.lower { border-top: 1px solid #c3e1ff; }
.card { text-align: center; font: 17px/32px Roboto, sans-serif; color: #1b3d62; }
.card h4 { font-size: 8px; line-height: 10px; }

.pane-head { display: flex; align-items: center; gap: 9px; height: 30px; color: #4b4947; }
.pane-head h2 { flex: 1; font-size: 12px; font-weight: 600; color: #383634; white-space: nowrap; }
.pane-head svg { width: 11px; height: 11px; }
.filters { position: relative; flex: none; width: 162px; background: #fff; border-left: 2px solid #e7e6e5; overflow: hidden; display: flex; flex-direction: column; }
.filters::after { content: ""; position: absolute; right: 0; top: 72px; bottom: 20px; width: 5px; background: #d3d2d1; }
.filters .pane-head { padding: 0 8px; flex: none; }
.pane-head .lead { width: 13px; height: 13px; stroke-width: 2; }
.filters h2 { margin-left: -2px; }
.eye { margin-right: 4px; }
.search { display: flex; align-items: center; gap: 8px; border: 1px solid #aba9a7; border-radius: 2px; background: #fff; }
.search input { border: 0; background: none; width: 100%; min-width: 0; padding: 0; outline: 0; font-size: 11px; line-height: 16px; }
.search input::placeholder { color: #605e5c; opacity: 1; }
.filters .search { flex: none; height: 27px; margin: 5px 8px 3px 5px; padding-left: 8px; }
.filters .search input { font-size: 10px; }
.filter-list { border-top: 1px solid #dddbda; padding: 12px 6px 0 5px; flex: 1; min-height: 0; overflow: hidden; }
.filter-list section { margin-bottom: 19px; }
.filter-list h3 { display: flex; justify-content: space-between; padding: 0 2px 4px 0; height: 21px; white-space: nowrap; }
.filter { height: 38px; border: 1px solid #d3d1d0; margin-bottom: 4px; padding: 4px 6px; line-height: 14px; white-space: nowrap; }
.add { display: flex; align-items: center; justify-content: center; padding: 0 10px 0 4px; }
.page-tabs { height: 27px; flex: none; display: flex; }
.step { width: 16px; }
.step svg { width: 7px; height: 7px; fill: #c5c3c1; }
.page { width: 61px; background: #fff; border-bottom: 3px solid #f2c811; color: #333; font-size: 10px; font-weight: 600; }
.add-page { width: 32px; background: #f2c811; }
.add-page svg { fill: #7b671d; width: 11px; height: 11px; }

.bookmarks { width: 150px; flex: none; display: flex; flex-direction: column; justify-content: space-between; }
.bookmark-box { position: relative; height: 176px; padding: 0 7px 0 4px; }
.bookmark-box::after { inset: 1px 2px 0 -2px; }
.bookmarks .pane-head { padding: 0 3px; gap: 6px; }
.bookmark-tools { display: flex; gap: 12px; height: 27px; padding: 0 5px; border-bottom: 1px solid #dddbda; white-space: nowrap; }
.bookmark-tools button { gap: 3px; }
.bookmark-tools svg { width: 12px; height: 14px; overflow: visible; }
.bookmark-box ul { font-size: 10px; }
.bookmark-box li { display: flex; justify-content: space-between; align-items: center; height: 21px; padding: 0 6px; }
.selected { background: #d2d0ce; }
.bookmarks footer { border-top: 1px solid #dddbda; padding: 2px 6px 9px 9px; line-height: 13px; }
.bookmarks a { color: #2a73b5; }

.visuals { width: 143px; flex: none; border-left: 1px solid #dddbda; border-right: 1px solid #dddbda; overflow: hidden; display: flex; flex-direction: column; }
.visuals .pane-head { flex: none; padding: 0 6px 0 3px; }
.visuals h3 { padding-left: 3px; height: 17px; font-weight: 600; white-space: nowrap; }
.modes { position: relative; display: flex; justify-content: space-between; padding: 0 8px 10px 3px; border-bottom: 1px solid #aaa8a6; flex: none; }
.modes button { width: 26px; height: 26px; }
.modes svg { width: 20px; height: 20px; }
.modes::after { content: ""; position: absolute; left: 13px; bottom: -5px; width: 8px; height: 8px; border: 1px solid #aaa8a6; border-right-color: transparent; border-bottom-color: transparent; transform: rotate(45deg); background: #f3f2f1; }
.viz-grid { display: grid; grid-template-columns: repeat(6, 1fr); grid-auto-rows: 20px; row-gap: 3px; padding: 6px 2px 0; height: 168px; flex: none; }
.viz-grid button { width: 20px; height: 20px; }
.viz-grid svg { width: 16px; height: 16px; }
.word { color: #2d7eb9; font-size: 14px; font-weight: 600; }
.d { stroke: #62605f; } .d:not([fill]) { fill: none; }
.b { fill: #4d9fe1; stroke: #3274aa; stroke-width: .5; }
.s { fill: #c4c6c8; stroke: #69696a; stroke-width: .7; }
.u { stroke: #347fbb; } .u:not([fill]) { fill: none; }
.o { fill: none; stroke: #dc9b62; }
.num { font: 6px "Open Sans", sans-serif; fill: #3985bd; }
.wells { position: relative; border-top: 1px solid #dddbda; flex: 1; padding: 5px 6px 0 1px; min-height: 0; }
.wells::after { content: ""; position: absolute; right: 0; top: 2px; width: 5px; height: 58px; background: #d0cfce; }
.wells h4 { height: 20px; padding-left: 4px; }
.well { background: #fff; border: 1px solid #e7e6e5; padding: 1px; margin-bottom: 7px; }
.roomy { padding-bottom: 6px; }
.field { display: flex; gap: 4px; align-items: center; height: 19px; background: #ecebea; border: 1px solid #d3d1d0; padding: 0 3px; margin-bottom: 1px; }
.field button:first-of-type { margin-left: auto; }
.field svg { width: 9px; height: 9px; }

.fields { width: 143px; flex: none; padding-left: 3px; }
.fields .pane-head { padding: 0 4px; }
.fields .search { height: 22px; margin-top: 6px; padding-left: 6px; gap: 4px; }
.fields ul { padding-top: 8px; }
.fields li { position: relative; display: flex; align-items: center; height: 19px; gap: 3px; padding-left: 4px; white-space: nowrap; }
.fields li .chev { width: 8px; }
.fields .badge { position: absolute; left: 20px; top: 9px; width: 9px; height: 9px; }

.status { height: 11px; flex: none; display: flex; justify-content: space-between; align-items: flex-start; border-top: 1px solid #dddbda; line-height: 20px; }
.status > span { margin-left: -4px; }
.zoom { display: flex; align-items: center; gap: 4px; padding-right: 9px; height: 20px; }
.zoom input { appearance: none; width: 80px; height: 2px; background: #333; }
.zoom input::-webkit-slider-thumb { appearance: none; width: 3px; height: 8px; background: #333; }
.percent { margin: 0 14px 0 8px; }
.shade { position: fixed; inset: auto 0 0 0; height: 38px; background: linear-gradient(transparent, rgba(0, 0, 0, .2)); pointer-events: none; }
.pip { position: fixed; right: 12px; bottom: 133px; width: 32px; height: 32px; border-radius: 50%; background: #656463; box-shadow: 0 1px 3px #999; }
.pip svg { width: 20px; height: 20px; }
.brand { position: fixed; right: 7px; bottom: 8px; width: 33px; height: 33px; background: linear-gradient(100deg, #e85ca3, #5d4c9c); color: #fff; text-align: center; font-size: 8px; font-weight: 600; line-height: 10px; }
.brand svg { width: 33px; height: 21px; }
```
